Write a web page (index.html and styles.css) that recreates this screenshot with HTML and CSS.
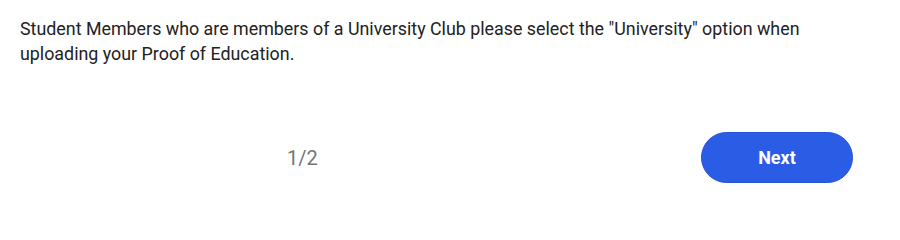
FILE: index.html
```html
<!DOCTYPE html>
<html lang="en">
<head>
<meta charset="utf-8">
<link rel="stylesheet" href="styles.css">
</head>
<body>
<div class="panel">
  <p class="message">Student Members who are members of a University Club please select the "University" option when uploading your Proof of Education.</p>
  <div class="footer">
    <span class="counter">1/2</span>
    <button class="next-btn">Next</button>
  </div>
</div>
</body>
</html>
```

FILE: styles.css
```css
html, body {
  margin: 0;
  padding: 0;
  background: #ffffff;
}
body {
  font-family: Roboto, "Noto Sans", sans-serif;
}
.panel {
  width: 900px;
  height: 231px;
  box-sizing: border-box;
  padding: 16px 20px 0 20px;
}
.message {
  margin: 0;
  font-size: 17.85px;
  line-height: 25px;
  color: #222222;
}
.footer {
  display: flex;
  align-items: center;
  margin-top: 66px;
  padding-right: 27px;
}
.counter {
  margin-left: 267px;
  font-size: 20px;
  color: #757575;
}
.next-btn {
  margin-left: auto;
  width: 152px;
  height: 51px;
  border-radius: 26px;
  border: 1px solid #2453d6;
  background: #2b5ce6;
  color: #ffffff;
  font-family: Roboto, "Noto Sans", sans-serif;
  font-weight: 700;
  font-size: 18px;
  cursor: pointer;
}
```
